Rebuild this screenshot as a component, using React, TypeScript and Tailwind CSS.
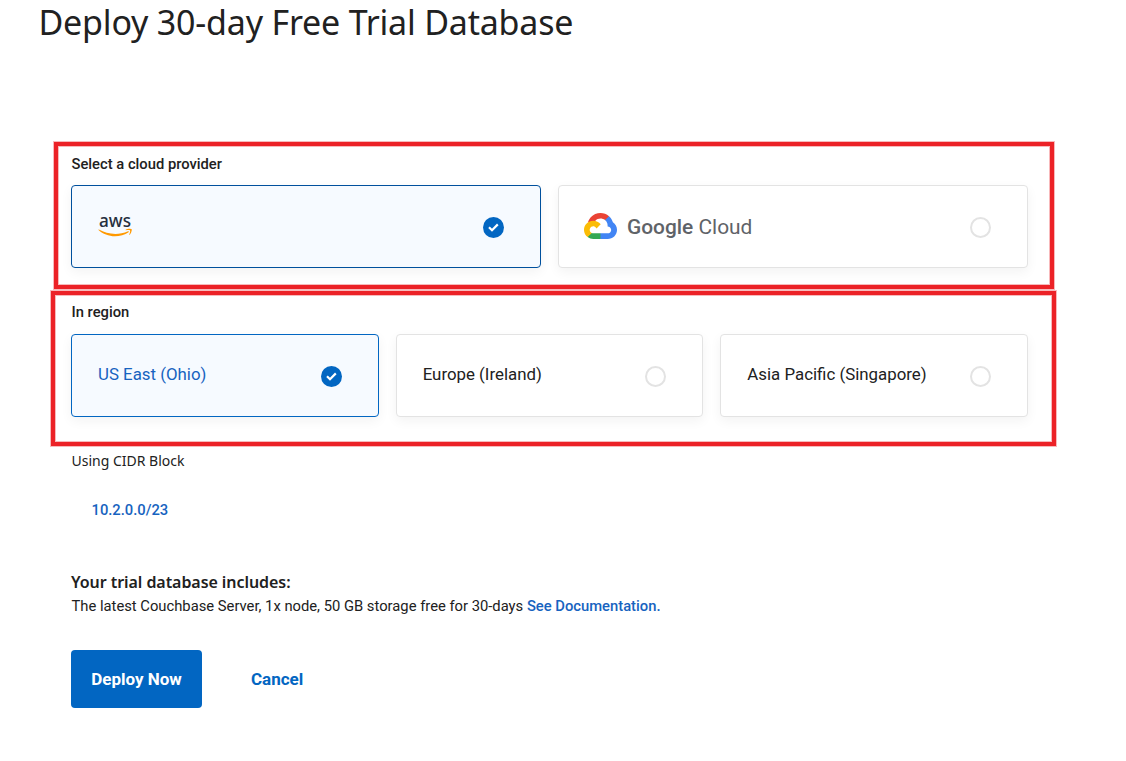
import type { ReactNode } from "react";

const ROBOTO = "font-['Roboto','Liberation_Sans',sans-serif]";
const HUMANIST = "font-['Noto_Sans','Open_Sans',sans-serif]";

function AwsLogo() {
  return (
    <svg width="40" height="34" viewBox="0 0 40 34" className="block overflow-visible" role="img" aria-label="aws">
      <text
        x="1"
        y="17.3"
        textLength="32"
        lengthAdjust="spacingAndGlyphs"
        fontSize="18.6"
        fontWeight="500"
        fill="#252f3e"
        className={HUMANIST}
      >
        aws
      </text>
      <g fill="#ff9900" transform="translate(0.2 6.2) scale(0.111)">
        <path d="M273.5,143.7c-32.9,24.3-80.7,37.2-121.8,37.2c-57.6,0-109.5-21.3-148.7-56.7c-3.1-2.8-0.3-6.6,3.4-4.4c42.4,24.6,94.7,39.5,148.8,39.5c36.5,0,76.6-7.6,113.5-23.2C274.2,133.6,278.9,139.7,273.5,143.7z" />
        <path d="M287.2,128.1c-4.2-5.4-27.8-2.6-38.5-1.3c-3.2,0.4-3.7-2.4-0.8-4.5c18.8-13.2,49.7-9.4,53.3-5c3.6,4.5-1,35.4-18.6,50.2c-2.7,2.3-5.3,1.1-4.1-1.9C282.5,155.7,291.4,133.4,287.2,128.1z" />
      </g>
    </svg>
  );
}

function GoogleCloudLogo() {
  return (
    <div className="-ml-px flex items-center">
      <svg width="33" height="26" viewBox="0 0 256 206" preserveAspectRatio="none" className="-mt-px block">
        <path fill="#ea4335" d="M170.25,56.82L192.5,34.57L193.99,25.2C153.44,-11.68 88.98,-7.5 52.42,33.92C42.27,45.42 34.73,59.76 30.72,74.57L38.69,73.45L83.19,66.11L86.63,62.6C106.42,40.85 139.9,37.93 162.76,56.43Z" />
        <path fill="#4285f4" d="M224.2,73.92C219.09,55.08 208.59,38.15 193.99,25.2L162.76,56.43C175.94,67.2 183.46,83.44 183.13,100.47L183.13,106.01C198.49,106.01 210.93,118.45 210.93,133.81C210.93,149.16 198.49,161.29 183.13,161.29L127.46,161.29L122,167.22L122,200.56L127.46,205.8L183.13,205.8C223.06,206.11 255.69,174.3 256,134.37C256.19,110.17 244.25,87.48 224.2,73.92" />
        <path fill="#34a853" d="M71.87,205.8L127.46,205.8L127.46,161.29L71.87,161.29C67.91,161.29 64,160.44 60.4,158.79L52.58,161.21L30.18,183.46L28.22,191.04C40.79,200.53 56.12,205.86 71.87,205.8" />
        <path fill="#fbbc05" d="M71.87,61.43C31.94,61.66 -0.24,94.23 0,134.16C0.13,156.46 10.55,177.45 28.22,191.04L60.47,158.79C46.48,152.47 40.26,136.01 46.58,122.02C52.9,108.02 69.37,101.81 83.36,108.13C89.52,110.91 94.46,115.85 97.25,122.02L129.49,89.77C115.77,71.83 94.45,61.34 71.87,61.43" />
      </svg>
      <span className="ml-[10px] text-[20.9px] leading-[28px] text-[#5f6368]">
        <span className="font-medium">Google</span> Cloud
      </span>
    </div>
  );
}

function Radio({ checked }: { checked?: boolean }) {
  if (!checked) {
    return <span className="mt-[2px] size-[21px] rounded-full border-2 border-[#e3e3e3] bg-white" />;
  }
  return (
    <span className="mt-[2px] flex size-[21px] items-center justify-center rounded-full bg-[#0266c2]">
      <svg width="11" height="9" viewBox="0 0 11 9" fill="none" stroke="#fff" strokeWidth="2.2">
        <path d="M1 4.2L4 7.2L9.8 1.4" />
      </svg>
    </span>
  );
}

function Card({ checked, tone, children }: { checked?: boolean; tone?: string; children: ReactNode }) {
  return (
    <div
      className={`flex h-[83px] items-center justify-between rounded-[4px] border pr-[36px] pl-[26px] shadow-[0_4px_12px_rgba(0,0,0,0.05)] ${
        checked ? `bg-[#f6faff] ${tone}` : "border-[#e3e3e3] bg-white"
      }`}
    >
      {children}
      <Radio checked={checked} />
    </div>
  );
}

const regions = [
  { name: "US East (Ohio)", checked: true },
  { name: "Europe (Ireland)", checked: false },
  { name: "Asia Pacific (Singapore)", checked: false },
];

const FRAME = "border-4 border-[#ec2227] shadow-[0_0_0_1px_#f8b9bb,inset_0_0_0_1px_#f8b9bb]";

export default function App() {
  return (
    <main className={`h-[761px] w-[1126px] overflow-hidden bg-white text-[#212121] ${ROBOTO}`}>
      <h1 className={`h-[142px] pl-[38.5px] text-[34px] leading-[45px] whitespace-nowrap ${HUMANIST}`}>
        <span className="tracking-[-0.2px]">Deploy 30-day Free Trial Database</span>
      </h1>

      <section className={`ml-[54px] h-[147px] w-[1000px] pl-[13px] ${FRAME}`}>
        <h2 className="pt-[8px] pl-[0.5px] text-[14.75px] leading-[20px] font-medium">Select a cloud provider</h2>
        <div className="mt-[11px] grid w-[957px] grid-cols-2 gap-[17px]">
          <Card checked tone="border-[#00509d]">
            <AwsLogo />
          </Card>
          <Card>
            <GoogleCloudLogo />
          </Card>
        </div>
      </section>

      <section className={`mt-[2px] ml-[51px] h-[155px] w-[1005px] pl-[16px] ${FRAME}`}>
        <h2 className="pt-[7px] pl-[0.5px] text-[14.75px] leading-[20px] font-medium">In region</h2>
        <div className="mt-[12px] grid w-[957px] grid-cols-3 gap-[17px]">
          {regions.map((r) => (
            <Card key={r.name} checked={r.checked} tone="border-[#0266c2]">
              <span
                className={`mb-[3px] text-[16.85px] leading-[24px] whitespace-nowrap ${r.checked ? "text-[#1763c0]" : ""}`}
              >
                {r.name}
              </span>
            </Card>
          ))}
        </div>
      </section>

      <div className="pl-[71px]">
        <p className={`pt-[5px] pl-[0.5px] text-[14px] leading-[20px] ${HUMANIST}`}>Using CIDR Block</p>
        <p className="mt-[29px] pl-[20.5px] text-[14.75px] leading-[20px] font-medium text-[#1763c0]">10.2.0.0/23</p>
        <h3 className={`mt-[50px] text-[16px] leading-[24px] font-semibold tracking-[-0.06px] ${HUMANIST}`}>
          Your trial database includes:
        </h3>
        <p className="mt-px pl-[0.5px] text-[14.77px] leading-[22px]">
          <span>The latest Couchbase Server, 1x node, 50 GB storage free for 30-days </span>
          <a className="font-medium text-[#1763c0]">See Documentation.</a>
        </p>
        <div className="mt-[33px] flex items-center">
          <button className="h-[58px] w-[131px] rounded-[4px] bg-[#0266c2] pt-[2px] text-[17px] font-bold text-white">
            Deploy Now
          </button>
          <button className="ml-[49px] pt-[2px] text-[17px] font-bold text-[#0266c2]">Cancel</button>
        </div>
      </div>
    </main>
  );
}
